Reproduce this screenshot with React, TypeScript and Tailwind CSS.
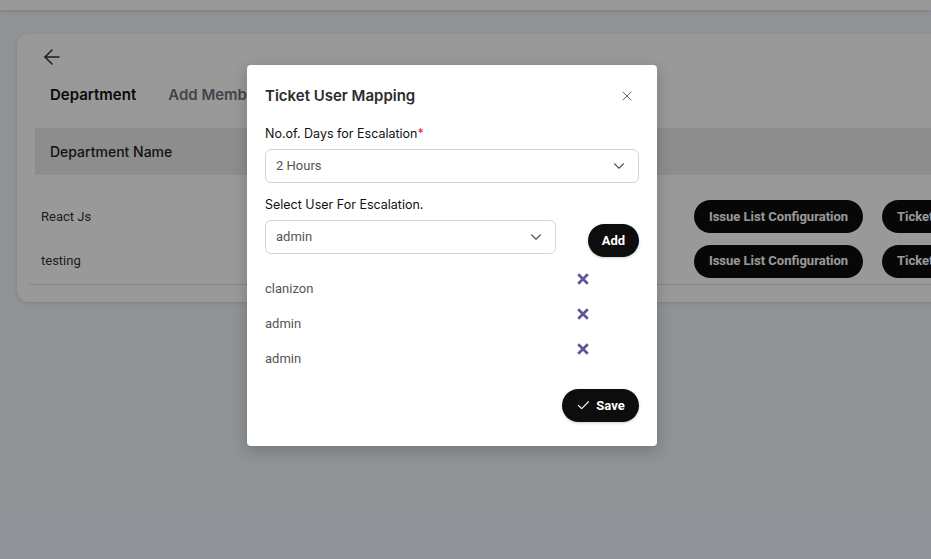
import React from "react";
import { ArrowLeft, X, ChevronDown, Check } from "lucide-react";

function CloseBold() {
  return (
    <svg width="20" height="20" viewBox="0 0 20 20">
      <path d="M5.2 5.2 L14.8 14.8 M14.8 5.2 L5.2 14.8" stroke="#5b5794" strokeWidth="2.7" strokeLinecap="butt" />
    </svg>
  );
}

export default function App() {
  const inter = { fontFamily: "Inter, 'Noto Sans', sans-serif" };
  const rows = ["React Js", "testing"];
  const users = ["clanizon", "admin", "admin"];
  return (
    <div className="relative w-[931px] h-[559px] overflow-hidden bg-[#eef5fb] font-['Inter',sans-serif]">
      <div className="h-[10px] bg-white shadow-[0_1px_4px_rgba(0,0,0,0.15)]" />
      <div className="pl-[17px] pt-[24px]">
        <div className="w-[960px] h-[268px] rounded-[12px] bg-white shadow-[0_1px_4px_rgba(0,0,0,0.12)] pt-[11px]">
          <div className="pl-[23px] h-[24px] flex items-center">
            <ArrowLeft size={24} strokeWidth={1.5} color="#333" />
          </div>
          <div className="flex gap-[32px] pl-[33px] pt-[15px] h-[59px] text-[15px] font-semibold">
            <span className="text-[#111]">Department</span>
            <span className="text-[#6b7280]">Add Members</span>
          </div>
          <div className="ml-[18px] h-[47px] bg-[#ececec] flex items-center pl-[15px] text-[14px] font-medium text-[#222]">
            Department Name
          </div>
          <div className="ml-[12px] mt-[19px] font-['Roboto',sans-serif]">
            {rows.map((r, i) => (
              <div
                key={i}
                className={
                  i === rows.length - 1
                    ? "h-[46px] pb-[1px] flex items-center border-b border-[#dddddd]"
                    : "h-[45px] flex items-center"
                }
              >
                <span className="pl-[12px] w-[665px] shrink-0 text-[13px] text-[#333]">{r}</span>
                <div className="flex gap-[19px] shrink-0">
                  <button className="h-[33px] w-[169px] shrink-0 rounded-full bg-[#0d0d0d] text-white text-[13px] font-bold">
                    Issue List Configuration
                  </button>
                  <button className="h-[33px] w-[169px] shrink-0 rounded-full bg-[#0d0d0d] text-white text-[13px] font-bold text-left pl-[15px] whitespace-nowrap">
                    Ticket
                  </button>
                </div>
              </div>
            ))}
          </div>
        </div>
      </div>

      <div className="absolute inset-0 bg-black/40" />

      <div className="absolute left-[247px] top-[65px] w-[410px] rounded-[4px] bg-white shadow-[0_4px_16px_rgba(0,0,0,0.2)] px-[18px] pt-[21px] pb-[24px]">
        <div className="flex items-center justify-between h-[20px]">
          <h2 className="text-[15px] font-semibold text-[#2b2b2b]" style={inter}>
            Ticket User Mapping
          </h2>
          <span className="mr-[4px] -mt-[1px] text-[#666]">
            <X size={16} strokeWidth={1.5} />
          </span>
        </div>
        <div className="mt-[19px] h-[18px] flex items-center text-[12.5px] text-[#111]" style={inter}>
          No.of. Days for Escalation<span className="text-[#e11d48]">*</span>
        </div>
        <div className="mt-[6px] h-[34px] w-[374px] rounded-[6px] border border-[#d1d5db] flex items-center justify-between pl-[10px] pr-[10px] font-['Roboto',sans-serif] text-[13px] text-[#555]">
          <span>2 Hours</span>
          <ChevronDown size={18} strokeWidth={1.5} color="#555" />
        </div>
        <div className="mt-[13px] h-[18px] flex items-center text-[12.5px] text-[#111]" style={inter}>
          Select User For Escalation.
        </div>
        <div className="mt-[6px] flex items-start justify-between">
          <div className="h-[34px] w-[291px] rounded-[6px] border border-[#d1d5db] flex items-center justify-between pl-[10px] pr-[10px] font-['Roboto',sans-serif] text-[13px] text-[#555]">
            <span>admin</span>
            <ChevronDown size={18} strokeWidth={1.5} color="#555" />
          </div>
          <button className="mt-[4px] h-[33px] w-[51px] rounded-full bg-[#0d0d0d] text-white text-[13px] font-bold font-['Roboto',sans-serif] shadow-[0_1px_3px_rgba(0,0,0,0.2)]">
            Add
          </button>
        </div>
        <div className="mt-[13px] font-['Roboto',sans-serif]">
          {users.map((u, i) => (
            <div key={i} className="flex items-start h-[35px]">
              <span className="w-[308px] pt-[9px] text-[13px] leading-[20px] text-[#555]">{u}</span>
              <div className="-mt-[1px]">
                <CloseBold />
              </div>
            </div>
          ))}
        </div>
        <div className="mt-[14px] flex justify-end">
          <button className="h-[33px] w-[77px] rounded-full bg-[#0d0d0d] text-white text-[13px] font-bold font-['Roboto',sans-serif] flex items-center justify-center gap-[5px] shadow-[0_1px_3px_rgba(0,0,0,0.2)]">
            <Check size={15} strokeWidth={1.75} />
            Save
          </button>
        </div>
      </div>
    </div>
  );
}
